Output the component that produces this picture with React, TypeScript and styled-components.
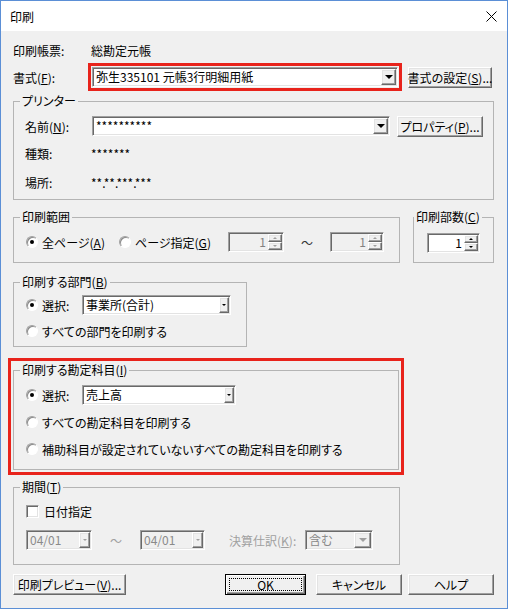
import React from "react";
import styled, { createGlobalStyle, css } from "styled-components";

const GlobalStyle = createGlobalStyle`
  html, body {
    margin: 0;
    padding: 0;
    background: #f0f0f0;
  }
  body {
    font-family: "Noto Sans CJK JP", "Noto Sans", sans-serif;
    font-size: 12px;
    color: #000;
  }
  * {
    box-sizing: border-box;
  }
`;

const sunken = css`
  border: 1px solid;
  border-color: #a0a0a0 #fff #fff #a0a0a0;
  box-shadow: inset 1px 1px 0 #696969, inset -1px -1px 0 #e3e3e3;
`;

const raised = css`
  border: 1px solid;
  border-color: #fff #696969 #696969 #fff;
  box-shadow: inset -1px -1px 0 #a0a0a0, inset 1px 1px 0 #e3e3e3;
  background: #f0f0f0;
`;

const Window = styled.div`
  width: 508px;
  height: 609px;
  border: 1px solid #5b8fd6;
  background: #f0f0f0;
  display: flex;
  flex-direction: column;
  font-feature-settings: "palt";
  overflow: hidden;
`;

const TitleBar = styled.div`
  height: 30px;
  flex-shrink: 0;
  background: #fff;
  display: flex;
  align-items: center;
  justify-content: space-between;
  padding: 0 10px 0 9px;
`;

const Content = styled.div`
  display: flex;
  flex-direction: column;
  padding: 9px 13px 0 12px;
`;

const Row = styled.div<{ $mt?: number }>`
  display: flex;
  align-items: center;
  height: 20px;
  margin-top: ${(p) => p.$mt ?? 0}px;
`;

const Label = styled.span<{ $w?: number; $disabled?: boolean }>`
  width: ${(p) => (p.$w ? `${p.$w}px` : "auto")};
  flex-shrink: 0;
  white-space: nowrap;
  color: ${(p) => (p.$disabled ? "#a0a0a0" : "#000")};
`;

const Combo = styled.div<{ $w: number; $disabled?: boolean; $mark?: boolean }>`
  ${sunken};
  width: ${(p) => p.$w}px;
  height: 20px;
  flex-shrink: 0;
  display: flex;
  align-items: stretch;
  background: ${(p) => (p.$disabled ? "#f0f0f0" : "#fff")};
  color: ${(p) => (p.$disabled ? "#8a8a8a" : "#000")};
  ${(p) =>
    p.$mark &&
    css`
      outline: 3px solid #e8231b;
      outline-offset: 1px;
    `}
`;

const ComboText = styled.span`
  flex: 1;
  padding: 0 3px;
  line-height: 18px;
  white-space: nowrap;
  overflow: hidden;
`;

const DropButton = styled.span<{ $w: number }>`
  ${raised};
  width: ${(p) => p.$w}px;
  margin: 1px;
  display: flex;
  align-items: center;
  justify-content: center;
`;

const Arrow = styled.span<{ $size: number; $up?: boolean; $color?: string }>`
  width: 0;
  height: 0;
  border-left: ${(p) => p.$size}px solid transparent;
  border-right: ${(p) => p.$size}px solid transparent;
  ${(p) =>
    p.$up
      ? css`
          border-bottom: ${Math.max(1, Math.ceil(p.$size * 0.6))}px solid ${p.$color ?? "#000"};
        `
      : css`
          border-top: ${Math.max(2, Math.ceil(p.$size * 0.9))}px solid ${p.$color ?? "#000"};
        `}
`;

const Button = styled.div<{ $w: number; $default?: boolean; $ml?: number }>`
  ${raised};
  width: ${(p) => p.$w}px;
  height: 21px;
  flex-shrink: 0;
  margin-left: ${(p) => (p.$ml === undefined ? "0" : p.$ml < 0 ? "auto" : `${p.$ml}px`)};
  display: flex;
  align-items: center;
  justify-content: center;
  white-space: nowrap;
  position: relative;
  ${(p) =>
    p.$default &&
    css`
      border: 1px solid #000;
      box-shadow: inset 1px 1px 0 #fff, inset -1px -1px 0 #696969, inset -2px -2px 0 #a0a0a0;
      &::after {
        content: "";
        position: absolute;
        inset: 3px;
        border: 1px dotted #000;
      }
    `}
`;

const Group = styled.fieldset<{ $w: number; $mt?: number; $ml?: number; $mark?: boolean }>`
  width: ${(p) => p.$w}px;
  min-width: 0;
  flex-shrink: 0;
  margin: ${(p) => p.$mt ?? 0}px 0 0 ${(p) => p.$ml ?? 0}px;
  padding: 0;
  border: 1px solid #b4b4b4;
  ${(p) =>
    p.$mark &&
    css`
      outline: 3px solid #e8231b;
      outline-offset: 2px;
    `}
`;

const Legend = styled.legend<{ $ml?: number }>`
  margin-left: ${(p) => p.$ml ?? 6}px;
  padding: 0 2px;
  line-height: 14px;
  white-space: nowrap;
`;

const GroupBody = styled.div<{ $pt: number; $pb: number; $pl: number }>`
  padding: ${(p) => p.$pt}px 0 ${(p) => p.$pb}px ${(p) => p.$pl}px;
`;

const RadioItem = styled.label<{ $w?: number }>`
  display: flex;
  align-items: center;
  width: ${(p) => (p.$w ? `${p.$w}px` : "auto")};
  flex-shrink: 0;
  white-space: nowrap;
`;

const RadioMark = styled.span<{ $checked?: boolean }>`
  width: 12px;
  height: 12px;
  border-radius: 50%;
  border: 1px solid;
  border-color: #a0a0a0 #fff #fff #a0a0a0;
  box-shadow: inset 1px 1px 0 #8a8a8a;
  background: #fff;
  margin-right: 4px;
  position: relative;
  ${(p) =>
    p.$checked &&
    css`
      &::after {
        content: "";
        position: absolute;
        left: 3px;
        top: 3px;
        width: 4px;
        height: 4px;
        border-radius: 50%;
        background: #000;
      }
    `}
`;

const CheckMark = styled.span`
  ${sunken};
  width: 13px;
  height: 13px;
  background: #fff;
  margin-right: 5px;
`;

const Spin = styled.div<{ $w: number; $disabled?: boolean }>`
  ${sunken};
  width: ${(p) => p.$w}px;
  height: 20px;
  flex-shrink: 0;
  display: flex;
  align-items: stretch;
  background: ${(p) => (p.$disabled ? "#f0f0f0" : "#fff")};
  color: ${(p) => (p.$disabled ? "#808080" : "#000")};
`;

const SpinValue = styled.span`
  flex: 1;
  text-align: right;
  padding-right: 2px;
  line-height: 18px;
`;

const SpinButtons = styled.span`
  width: 14px;
  margin: 1px 1px 1px 0;
  display: flex;
  flex-direction: column;
`;

const SpinHalf = styled.span`
  ${raised};
  flex: 1;
  display: flex;
  align-items: center;
  justify-content: center;
`;

const Tilde = styled.span<{ $w: number; $disabled?: boolean }>`
  width: ${(p) => p.$w}px;
  flex-shrink: 0;
  text-align: center;
  color: ${(p) => (p.$disabled ? "#a0a0a0" : "#333")};
`;

const GroupRow = styled.div`
  display: flex;
  align-items: flex-start;
  margin-top: 10px;
`;

const ButtonBar = styled.div`
  display: flex;
  align-items: center;
  margin-top: 9px;
`;

const SpinBox: React.FC<{ w: number; value: string; disabled?: boolean }> = ({ w, value, disabled }) => {
  const c = disabled ? "#a0a0a0" : "#000";
  return (
    <Spin $w={w} $disabled={disabled}>
      <SpinValue>{value}</SpinValue>
      <SpinButtons>
        <SpinHalf>
          <Arrow $size={2} $up $color={c} />
        </SpinHalf>
        <SpinHalf>
          <Arrow $size={2} $color={c} />
        </SpinHalf>
      </SpinButtons>
    </Spin>
  );
};

const DropDown: React.FC<{
  w: number;
  text: string;
  btn: number;
  arrow: number;
  disabled?: boolean;
  mark?: boolean;
}> = ({ w, text, btn, arrow, disabled, mark }) => (
  <Combo $w={w} $disabled={disabled} $mark={mark}>
    <ComboText>{text}</ComboText>
    <DropButton $w={btn}>
      <Arrow $size={arrow} $color={disabled ? "#a0a0a0" : "#000"} />
    </DropButton>
  </Combo>
);

const Radio: React.FC<{ w?: number; checked?: boolean; children: React.ReactNode }> = ({
  w,
  checked,
  children,
}) => (
  <RadioItem $w={w}>
    <RadioMark $checked={checked} />
    {children}
  </RadioItem>
);

const CloseIcon = () => (
  <svg width="11" height="11" viewBox="0 0 11 11">
    <path d="M0.5 0.5 L10.5 10.5 M10.5 0.5 L0.5 10.5" stroke="#000" strokeWidth="1" fill="none" />
  </svg>
);

const App: React.FC = () => {
  return (
    <>
      <GlobalStyle />
      <Window>
        <TitleBar>
          <span>印刷</span>
          <CloseIcon />
        </TitleBar>
        <Content>
          <Row>
            <Label $w={78}>印刷帳票:</Label>
            <span>総勘定元帳</span>
          </Row>
          <Row $mt={7}>
            <Label $w={79}>
              書式(<u>F</u>):
            </Label>
            <DropDown w={306} text="弥生335101 元帳3行明細用紙" btn={15} arrow={4} mark />
            <Button $w={84} $ml={10}>
              書式の設定(<u>S</u>)...
            </Button>
          </Row>

          <Group $w={481} $mt={7}>
            <Legend>プリンター</Legend>
            <GroupBody $pt={8} $pb={7} $pl={11}>
              <Row>
                <Label $w={67}>
                  名前(<u>N</u>):
                </Label>
                <DropDown w={298} text="**********" btn={15} arrow={4} />
                <Button $w={86} $ml={7}>
                  プロパティ(<u>P</u>)...
                </Button>
              </Row>
              <Row $mt={7}>
                <Label $w={66}>種類:</Label>
                <span>*******</span>
              </Row>
              <Row $mt={9}>
                <Label $w={66}>場所:</Label>
                <span>**.**.***.***</span>
              </Row>
            </GroupBody>
          </Group>

          <GroupRow>
            <Group $w={387}>
              <Legend>印刷範囲</Legend>
              <GroupBody $pt={8} $pb={10} $pl={12}>
                <Row>
                  <Radio w={93} checked>
                    全ページ(<u>A</u>)
                  </Radio>
                  <Radio w={109}>
                    ページ指定(<u>G</u>)
                  </Radio>
                  <SpinBox w={56} value="1" disabled />
                  <Tilde $w={46}>～</Tilde>
                  <SpinBox w={54} value="1" disabled />
                </Row>
              </GroupBody>
            </Group>
            <Group $w={81} $ml={13}>
              <Legend $ml={0}>
                印刷部数(<u>C</u>)
              </Legend>
              <GroupBody $pt={9} $pb={9} $pl={13}>
                <Row>
                  <SpinBox w={53} value="1" />
                </Row>
              </GroupBody>
            </Group>
          </GroupRow>

          <Group $w={234} $mt={12}>
            <Legend>
              印刷する部門(<u>B</u>)
            </Legend>
            <GroupBody $pt={6} $pb={5} $pl={12}>
              <Row>
                <Radio w={56} checked>
                  選択:
                </Radio>
                <DropDown w={149} text="事業所(合計)" btn={10} arrow={2} />
              </Row>
              <Row $mt={6}>
                <Radio>すべての部門を印刷する</Radio>
              </Row>
            </GroupBody>
          </Group>

          <Group $w={386} $mt={16} $mark>
            <Legend>
              印刷する勘定科目(<u>I</u>)
            </Legend>
            <GroupBody $pt={8} $pb={10} $pl={12}>
              <Row>
                <Radio w={56} checked>
                  選択:
                </Radio>
                <DropDown w={154} text="売上高" btn={10} arrow={2} />
              </Row>
              <Row $mt={7}>
                <Radio>すべての勘定科目を印刷する</Radio>
              </Row>
              <Row $mt={7}>
                <Radio>補助科目が設定されていないすべての勘定科目を印刷する</Radio>
              </Row>
            </GroupBody>
          </Group>

          <Group $w={387} $mt={10}>
            <Legend>
              期間(<u>T</u>)
            </Legend>
            <GroupBody $pt={7} $pb={14} $pl={12}>
              <Row>
                <RadioItem>
                  <CheckMark />
                  日付指定
                </RadioItem>
              </Row>
              <Row $mt={9}>
                <DropDown w={66} text="04/01" btn={11} arrow={2} disabled />
                <Tilde $w={48} $disabled>
                  ～
                </Tilde>
                <DropDown w={65} text="04/01" btn={11} arrow={2} disabled />
                <Label $w={76} $disabled style={{ marginLeft: 24 }}>
                  決算仕訳(<u>K</u>):
                </Label>
                <DropDown w={68} text="含む" btn={17} arrow={4} disabled />
              </Row>
            </GroupBody>
          </Group>

          <ButtonBar>
            <Button $w={113}>
              印刷プレビュー(<u>V</u>)...
            </Button>
            <Button $w={81} $ml={-1} $default>
              OK
            </Button>
            <Button $w={86} $ml={10}>
              キャンセル
            </Button>
            <Button $w={86} $ml={6}>
              ヘルプ
            </Button>
          </ButtonBar>
        </Content>
      </Window>
    </>
  );
};

export default App;
